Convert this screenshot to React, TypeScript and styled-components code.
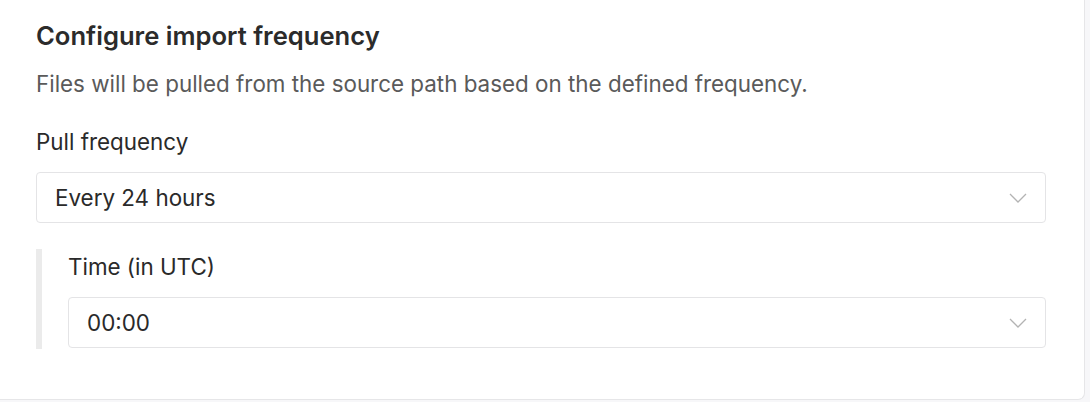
import styled, { createGlobalStyle } from "styled-components";

const GlobalStyle = createGlobalStyle`
  html, body {
    margin: 0;
    padding: 0;
    background: #f7f7f9;
    font-family: Inter, "Noto Sans", sans-serif;
  }
`;

const Card = styled.section`
  box-sizing: border-box;
  width: 1085px;
  height: 400px;
  background: #ffffff;
  border-right: 1px solid #e6e6e8;
  border-bottom: 1px solid #e6e6e8;
  border-bottom-right-radius: 7px;
  padding: 21px 38px 0 36px;
  display: flex;
  flex-direction: column;
`;

const Title = styled.h2`
  margin: 0;
  font-size: 25.6px;
  font-weight: 600;
  line-height: 30px;
  color: #2b2b2b;
`;

const Description = styled.p`
  margin: 19px 0 0;
  font-size: 22.4px;
  line-height: 28px;
  color: #5a5a5a;
`;

const Field = styled.div<{ $top: number }>`
  display: flex;
  flex-direction: column;
  gap: 16px;
  margin-top: ${({ $top }) => $top}px;
`;

const Label = styled.label`
  font-size: 22.4px;
  line-height: 28px;
  color: #2a2a2a;
`;

const Select = styled.div`
  box-sizing: border-box;
  height: 51px;
  display: flex;
  align-items: center;
  justify-content: space-between;
  padding: 0 18px 0 18px;
  border: 1px solid #e4e4e6;
  border-radius: 4px;
  background: #fff;
  font-size: 22.4px;
  color: #2a2a2a;
`;

const Nested = styled.div`
  display: flex;
  margin-top: 26px;
`;

const Rail = styled.div`
  width: 6px;
  background: #ebebeb;
  margin-right: 26px;
`;

const NestedBody = styled.div`
  flex: 1;
  padding: 4px 0 1px;
`;

const Chevron = () => (
  <svg width="18" height="10" viewBox="0 0 18 10" fill="none">
    <path d="M1 1 L9 9 L17 1" stroke="#b3b3b3" strokeWidth="1.3" />
  </svg>
);

export default function App() {
  return (
    <>
      <GlobalStyle />
      <Card>
        <Title>Configure import frequency</Title>
        <Description>
          Files will be pulled from the source path based on the defined frequency.
        </Description>
        <Field $top={30}>
          <Label>Pull frequency</Label>
          <Select>
            Every 24 hours
            <Chevron />
          </Select>
        </Field>
        <Nested>
          <Rail />
          <NestedBody>
            <Field $top={0}>
              <Label>Time (in UTC)</Label>
              <Select>
                00:00
                <Chevron />
              </Select>
            </Field>
          </NestedBody>
        </Nested>
      </Card>
    </>
  );
}
